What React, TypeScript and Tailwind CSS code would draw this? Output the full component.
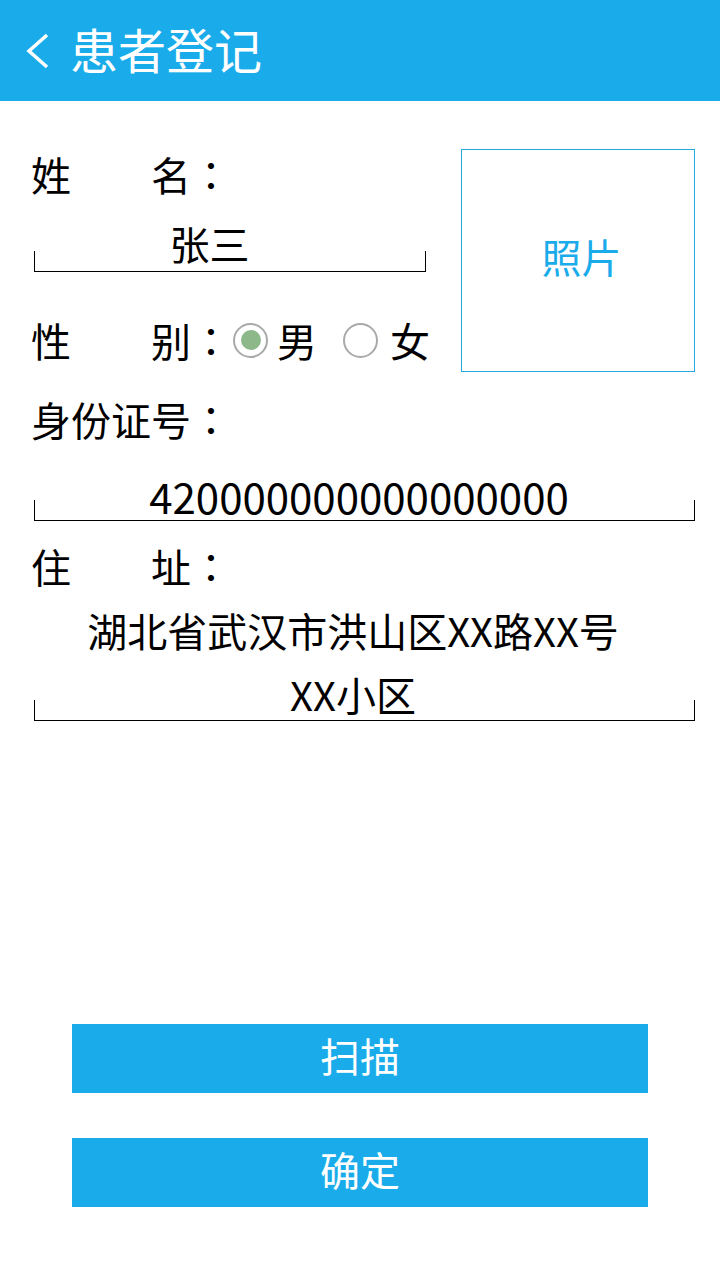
import React from 'react';

const FONT = '"Noto Sans CJK SC", "Noto Sans", sans-serif';
const TC = { fontFamily: '"Noto Sans CJK TC", sans-serif' };

function Field({ children, className = '' }: { children: React.ReactNode; className?: string }) {
  return (
    <div className={`flex items-end border-b border-black ${className}`}>
      <span className="w-px h-[20px] bg-black shrink-0" />
      <div className="flex-1 text-center">{children}</div>
      <span className="w-px h-[20px] bg-black shrink-0" />
    </div>
  );
}

function Radio({ checked }: { checked?: boolean }) {
  return (
    <span className="w-[35px] h-[35px] rounded-full border-2 border-[#a9a9a9] flex items-center justify-center shrink-0">
      {checked && <span className="w-[20px] h-[20px] rounded-full bg-[#8db88a]" />}
    </span>
  );
}

// 全角冒号居中显示
const Colon = () => <span style={TC}>：</span>;

export default function App() {
  return (
    <div className="w-[720px] h-[1280px] bg-white flex flex-col text-black" style={{ fontFamily: FONT }}>
      {/* 顶栏 */}
      <div className="h-[101px] bg-[#1aacea] flex items-center shrink-0">
        <svg width="24" height="36" viewBox="0 0 24 36" className="ml-[26px]" aria-hidden>
          <polyline points="21,2 3,18 21,34" fill="none" stroke="#fff" strokeWidth="3.5" strokeLinejoin="miter" />
        </svg>
        <span className="ml-[20px] mb-[5px] text-[48px] leading-[48px] text-white">患者登记</span>
      </div>

      <div className="pl-[31px] pr-[25px] text-[40px] leading-[40px]">
        {/* 姓名 / 性别 / 照片 */}
        <div className="flex mt-[48px]">
          <div className="w-[395px] flex flex-col">
            <div className="mt-[5px] whitespace-pre">姓　　名<Colon /></div>
            <Field className="ml-[3px] mt-[29px]">
              <div className="pb-[8px] pr-[41px]">张三</div>
            </Field>
            <div className="flex items-center mt-[48px] h-[40px]">
              <span className="whitespace-pre leading-[32px]">性　　别<Colon /></span>
              <span className="ml-[2px]"><Radio checked /></span>
              <span className="ml-[9px] leading-[32px]">男</span>
              <span className="ml-[26px]"><Radio /></span>
              <span className="ml-[12px] leading-[32px]">女</span>
            </div>
          </div>
          <div className="ml-auto w-[234px] h-[223px] border border-[#29a8e0] flex items-center justify-center text-[#1aacea] pb-[10px] pl-[7px]">
            照片
          </div>
        </div>

        {/* 身份证号 */}
        <div className="mt-[27px]">身份证号<Colon /></div>
        <Field className="ml-[3px] mt-[37px]">
          <div className="text-[42px] pb-[4px] pr-[11px]">420000000000000000</div>
        </Field>

        {/* 住址 */}
        <div className="mt-[25px] whitespace-pre">住　　址<Colon /></div>
        <Field className="ml-[3px] mt-[24px]">
          <div className="pb-[6px] pr-[23px]">
            <div>湖北省武汉市洪山区XX路XX号</div>
            <div className="mt-[24px]">XX小区</div>
          </div>
        </Field>
      </div>

      {/* 按钮 */}
      <div className="mt-auto mb-[73px] flex flex-col items-center gap-[45px]">
        <button className="w-[576px] h-[69px] bg-[#1aacea] text-white text-[40px] leading-[40px] pb-[8px]">扫描</button>
        <button className="w-[576px] h-[69px] bg-[#1aacea] text-white text-[40px] leading-[40px] pb-[8px]">确定</button>
      </div>
    </div>
  );
}
